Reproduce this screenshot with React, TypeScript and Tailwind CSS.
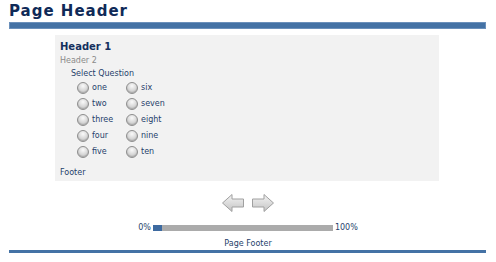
import React from 'react'

const font = { fontFamily: '"DejaVu Sans", Verdana, sans-serif' }

const left = ['one', 'two', 'three', 'four', 'five']
const right = ['six', 'seven', 'eight', 'nine', 'ten']

function Radio({ label }: { label: string }) {
  return (
    <label className="flex items-center gap-[3px] h-[16px]">
      <span className="shrink-0 w-[12px] h-[12px] rounded-full border border-[#8e8e8e] bg-[radial-gradient(circle_at_50%_30%,#fafafa,#c9c9c9_75%)] shadow-[inset_0_-1px_1px_rgba(0,0,0,0.15)]" />
      <span className="text-[8px] text-[#263f6b] whitespace-nowrap">{label}</span>
    </label>
  )
}

function Arrow({ dir }: { dir: 'left' | 'right' }) {
  const id = `g-${dir}`
  return (
    <svg width="24" height="20" viewBox="0 0 24 20" className={dir === 'right' ? 'scale-x-[-1]' : ''}>
      <defs>
        <linearGradient id={id} x1="0" y1="0" x2="0" y2="1">
          <stop offset="0" stopColor="#f4f4f4" />
          <stop offset="1" stopColor="#c4c4c4" />
        </linearGradient>
      </defs>
      <path
        d="M1.5 10 L11 1.5 L11 6 L22.5 6 L22.5 14 L11 14 L11 18.5 Z"
        fill={`url(#${id})`}
        stroke="#a0a0a0"
        strokeWidth="1"
        strokeLinejoin="round"
      />
    </svg>
  )
}

export default function App() {
  return (
    <div className="w-[496px] h-[262px] bg-white flex flex-col overflow-hidden" style={font}>
      <h1 className="ml-[9px] h-[22px] text-[15px] leading-[22px] font-bold tracking-[1px] text-[#0f2a58]">
        Page Header
      </h1>
      <div className="ml-[9px] w-[477px] h-[7px] bg-[#4472a5] border border-[#6b90bb]" />

      <div className="ml-[55px] mt-[6px] w-[384px] h-[146px] bg-[#f2f2f2] pl-[5px] pt-[5px] flex flex-col">
        <div className="text-[10px] font-bold text-[#15305e] leading-[14px]">Header 1</div>
        <div className="text-[8px] text-[#8a8a8a] leading-[12px] mt-[1px]">Header 2</div>
        <div className="ml-[11px] text-[8px] text-[#263f6b] leading-[12px] mt-[1px]">Select Question</div>
        <div className="ml-[17px] flex gap-[18px]">
          <div className="flex flex-col w-[31px]">
            {left.map((l) => (
              <Radio key={l} label={l} />
            ))}
          </div>
          <div className="flex flex-col">
            {right.map((l) => (
              <Radio key={l} label={l} />
            ))}
          </div>
        </div>
        <div className="mt-[7px] text-[8px] text-[#263f6b] leading-[12px]">Footer</div>
      </div>

      <div className="mt-[12px] flex justify-center gap-[6px]">
        <Arrow dir="left" />
        <Arrow dir="right" />
      </div>

      <div className="mt-[9px] flex items-center justify-center text-[8px] text-[#263f6b] gap-[2px]">
        <span>0%</span>
        <div className="w-[180px] h-[6px] bg-[#ababab] flex">
          <div className="w-[9px] h-full bg-[#3d6aa0]" />
        </div>
        <span>100%</span>
      </div>

      <div className="mt-[4px] text-center text-[8px] text-[#263f6b] leading-[11px]">Page Footer</div>
      <div className="ml-[9px] mt-[1px] w-[477px] h-[3px] bg-[#4472a5]" />
    </div>
  )
}
